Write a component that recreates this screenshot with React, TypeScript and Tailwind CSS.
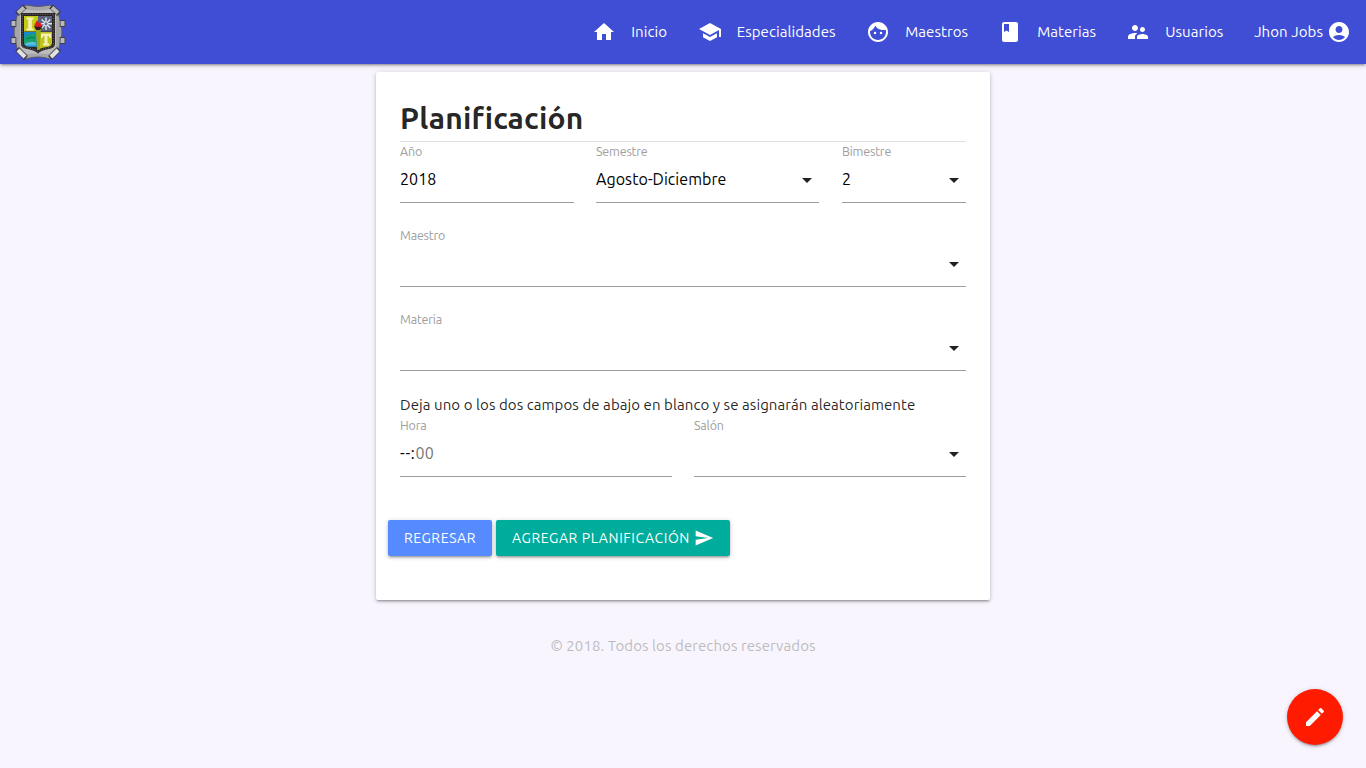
import type { ReactNode } from 'react';
import type { IconType } from 'react-icons';
import {
  MdAccountCircle,
  MdArrowDropDown,
  MdBook,
  MdEdit,
  MdFace,
  MdHome,
  MdSchool,
  MdSend,
  MdSupervisorAccount,
} from 'react-icons/md';

const links: { label: string; icon: IconType; width: string }[] = [
  { label: 'Inicio', icon: MdHome, width: 'w-[105.5px]' },
  { label: 'Especialidades', icon: MdSchool, width: 'w-[168.5px]' },
  { label: 'Maestros', icon: MdFace, width: 'w-[132px]' },
  { label: 'Materias', icon: MdBook, width: 'w-[128px]' },
  { label: 'Usuarios', icon: MdSupervisorAccount, width: 'w-[128px]' },
];

function Crest() {
  return (
    <svg viewBox="0 0 56 58" className="h-[58px] w-14">
      <path
        d="M16 2Q28 5 40 2L48 9L50 17Q52 22 52 29Q52 36 50 41L48 49L40 56Q28 52 16 56L8 49L6 41Q4 36 4 29Q4 22 6 17L8 9Z"
        fill="#a6a6a8"
        stroke="#5a5a60"
        strokeWidth="1"
      />
      <g fill="none" stroke="#3c3c42" strokeWidth="5.600" strokeLinecap="butt">
        <path d="M7 11L15 3.500M49 11L41 3.500M7 46L16 55M49 46L40 55M3.500 17V24M52.500 17V24M3.500 34V41M52.500 34V41" />
      </g>
      <g fill="none" stroke="#b9b9bc" strokeWidth="4" strokeLinecap="butt">
        <path d="M8 10L14 4.500M48 10L42 4.500M3.500 18V23M52.500 18V23M3.500 35V40M52.500 35V40" />
      </g>
      <g fill="none" stroke="#e2e2e3" strokeWidth="4.200" strokeLinecap="butt">
        <path d="M8 47L15 54M48 47L41 54" />
      </g>
      <path d="M16 6Q28 9 40 6L46 12V44L39 51Q28 50 17 51L10 44V12Z" fill="#bdbdbf" />
      <path d="M11 10H45V41Q45 45 39 46Q31 47 28 50.500Q25 47 17 46Q11 45 11 41Z" fill="#2b2526" />
      <path
        d="M12.300 11.300H43.700V41Q43.700 44 38 45Q31 46 28 49Q25 46 18 45Q12.300 44 12.300 41Z"
        fill="none"
        stroke="#8d8582"
        strokeWidth=".8"
        strokeDasharray="1 1.500"
      />
      <path d="M14 13H28V28.500H14Z" fill="#c3cb16" />
      <path d="M28 13H42V28.500H28Z" fill="#5a637d" />
      <path d="M14 29H27V44H19Q14 43.500 14 40Z" fill="#1689c8" />
      <path d="M28 29H42V40Q42 43.500 37 44Q31 44.500 28 47Z" fill="#bdc51c" />
      <path d="M16.500 14.500H23.500V16.500H21.800V25.500H23.500V27.500H16.500V25.500H18.200V16.500H16.500Z" fill="#f5f0b4" />
      <path d="M31 30.500H41V35H39.400L38.800 33H37.500V40.500H39.200V42.500H32.800V40.500H34.500V33H33.200L32.600 35H31Z" fill="#f5f0b4" />
      <path d="M14 35L19 31.500L26 31V38L22 41H14Z" fill="#16a268" />
      <path d="M14.500 41Q20 37.500 26 39.500V42.500H16Z" fill="#58bddb" />
      <path d="M16 36Q21 33 25 35" fill="none" stroke="#0b6a55" strokeWidth=".8" />
      <g stroke="#e3e7f0" strokeWidth="1.400">
        <path d="M36 14.500V27M30 20.800H42M31.700 16.500L40.300 25M40.300 16.500L31.700 25" />
      </g>
      <circle cx="36" cy="20.800" r="1.500" fill="#6d7694" />
      <path d="M25.800 26H30.800L29.500 47H27Z" fill="#93ab20" />
      <path d="M24 23H32.500L30 27H26Z" fill="#30201a" />
      <path d="M25 23.500Q23.500 20.500 26 20Q25 18 28 17.500Q27 20 30.500 20Q32.500 21.500 31 24Z" fill="#e01b1c" />
    </svg>
  );
}

function Field({
  label,
  width,
  select = true,
  children,
}: {
  label: string;
  width: string;
  select?: boolean;
  children?: ReactNode;
}) {
  return (
    <div className={width}>
      <div className="h-4 text-[12.5px] leading-[14px] tracking-[-0.19px] text-[#9e9e9e]">{label}</div>
      <div className="flex h-[43px] items-center justify-between border-b border-[#9e9e9e] pb-0.5 text-[16px] tracking-[0.06px] text-black">
        <span className="pb-0.5">{children}</span>
        {select && <MdArrowDropDown className="size-6 text-black/87" />}
      </div>
    </div>
  );
}

const raised =
  'shadow-[0_2px_2px_0_rgba(0,0,0,0.14),0_3px_1px_-2px_rgba(0,0,0,0.12),0_1px_5px_0_rgba(0,0,0,0.2)]';

export default function App() {
  return (
    <div className="flex min-h-screen flex-col bg-[#f8f5ff] font-[Ubuntu,'Noto_Sans',sans-serif] text-[15px] tracking-[0.075px] text-black/87">
      <nav className={`flex h-16 items-center bg-[#3f4ed5] pl-[10px] text-white ${raised}`}>
        <a href="#" className="mr-auto block">
          <Crest />
        </a>
        {links.map(({ label, icon: Icon, width }) => (
          <a key={label} href="#" className={`flex items-center gap-[15px] ${width}`}>
            <Icon className="size-6 shrink-0" />
            <span>{label}</span>
          </a>
        ))}
        <a href="#" className="flex items-center gap-1 pr-[15px]">
          Jhon Jobs
          <MdAccountCircle className="size-6" />
        </a>
      </nav>

      <main className={`mx-auto mt-2 h-[528px] w-[614px] rounded-xs bg-white px-6 ${raised}`}>
        <h1 className="h-[69px] pt-7 text-[30px] leading-9 font-bold tracking-[0.2px]">
          Planificación
        </h1>
        <div className="border-t border-[#e0e0e0]" />
        <div className="flex pt-[2px]">
          <Field label="Año" width="w-[174px]" select={false}>
            2018
          </Field>
          <Field label="Semestre" width="ml-[22px] w-[223px]">
            Agosto-Diciembre
          </Field>
          <Field label="Bimestre" width="ml-auto w-[124px]">
            2
          </Field>
        </div>
        <div className="pt-[25px]">
          <Field label="Maestro" width="w-full" />
        </div>
        <div className="pt-[25px]">
          <Field label="Materia" width="w-full" />
        </div>
        <p className="pt-[23px] pb-px leading-[22.5px]">
          Deja uno o los dos campos de abajo en blanco y se asignarán aleatoriamente
        </p>
        <div className="flex justify-between">
          <Field label="Hora" width="w-[272px]" select={false}>
            <span className="tracking-[0.8px]">--:</span>
            <span className="text-[#757575]">00</span>
          </Field>
          <Field label="Salón" width="w-[272px]" />
        </div>
        <div className="-ml-3 flex gap-1 pt-[43px] text-[14px] tracking-[0.6px] text-white">
          <button className={`h-9 w-[104px] rounded-xs bg-[#558bff] pt-0.5 ${raised}`}>
            REGRESAR
          </button>
          <button
            className={`flex h-9 w-[234px] items-center gap-1 rounded-xs bg-[#00ac9b] pl-4 ${raised}`}
          >
            <span className="pt-0.5">AGREGAR PLANIFICACIÓN</span>
            <MdSend className="size-5" />
          </button>
        </div>
      </main>

      <footer className="pt-[35px] text-center leading-[22.5px] text-[#bdbdbd]">
        © 2018. Todos los derechos reservados
      </footer>

      <button className={`fixed right-[23px] bottom-[23px] flex size-14 items-center justify-center rounded-full bg-[#ff1b00] text-white ${raised}`}>
        <MdEdit className="size-6" />
      </button>
    </div>
  );
}
